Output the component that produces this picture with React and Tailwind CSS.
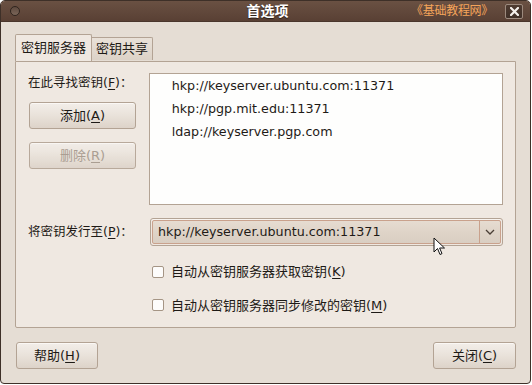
const FONT = "font-['DejaVu_Sans','Noto_Sans_CJK_SC',sans-serif]";

const Mn = ({ children }) => <span className="underline underline-offset-2">{children}</span>;

const Button = ({ children, disabled, className = "" }) => (
  <button
    disabled={disabled}
    className={`flex items-center justify-center rounded-[3px] border border-[#b3a394] bg-linear-to-b from-[#f3eee9] via-[#e9e2da] to-[#ddd3c9] text-[13px] shadow-[inset_0_1px_0_#fbf8f5] ${
      disabled ? "text-[#a3968a] opacity-90" : "text-[#1e1a16]"
    } ${className}`}
  >
    {children}
  </button>
);

const Checkbox = ({ children }) => (
  <label className="flex items-center gap-[7px] text-[13px] text-[#1e1a16]">
    <span className="w-[12px] h-[12px] rounded-[2px] border border-[#a59585] bg-[#fdfcfb]" />
    <span>{children}</span>
  </label>
);

export default function App() {
  const servers = ["hkp://keyserver.ubuntu.com:11371", "hkp://pgp.mit.edu:11371", "ldap://keyserver.pgp.com"];

  return (
    <div className={`w-[532px] h-[385px] bg-white relative ${FONT}`}>
      <div className="w-[531px] h-[384px] flex flex-col rounded-t-[5px] rounded-b-[4px] border border-[#3e3028] overflow-hidden bg-[#e5ddd4]">
        {/* title bar */}
        <div className="h-[21px] flex items-center bg-linear-to-b from-[#6a5143] to-[#594034] border-b border-[#4a362c] relative">
          <div className="ml-[9px] w-[10px] h-[10px] rounded-full border border-[#2f241e] bg-linear-to-b from-[#5e4a3f] to-[#7a6558]" />
          <div className="flex-1 text-center text-white font-bold text-[14px] pl-[104px] [text-shadow:0_1px_1px_#2a1d16]">首选项</div>
          <div className="text-[#f4a45a] text-[12px] tracking-[-0.3px] mr-[12px]">《基础教程网》</div>
          <div className="w-[18px] h-[15px] mr-[7px] rounded-[2px] border border-[#9c8a7e] bg-linear-to-b from-[#4e3b31] to-[#3f2f27] flex items-center justify-center">
            <svg width="9" height="9" viewBox="0 0 9 9">
              <path d="M1 1 L8 8 M8 1 L1 8" stroke="#f4f0ec" strokeWidth="2.2" strokeLinecap="square" />
            </svg>
          </div>
        </div>

        {/* body */}
        <div className="flex-1 flex flex-col px-[14px] pt-[13px] pb-[14px]">
          {/* tabs */}
          <div className="flex items-end h-[26px] relative z-10">
            <div className="h-[27px] px-[5px] flex items-center text-[13px] text-[#1e1a16] bg-[#efe8e1] border border-b-0 border-[#b3a394] rounded-t-[2px]">
              密钥服务器
            </div>
            <div className="h-[23px] px-[4px] mb-[1px] flex items-center text-[13px] text-[#1e1a16] bg-linear-to-b from-[#e9e1d8] to-[#dcd2c7] border border-b-0 border-l-0 border-[#b3a394] rounded-tr-[2px]">
              密钥共享
            </div>
          </div>

          {/* panel */}
          <div className="h-[267px] flex flex-col bg-[#efe8e1] border border-[#b3a394] rounded-b-[2px] pl-[12px] pr-[12px] pt-[11px]">
            <div className="flex">
              <div className="w-[121px] flex flex-col pt-[2px]">
                <div className="text-[12.5px] text-[#1e1a16] leading-[16px]">在此寻找密钥(<Mn>F</Mn>)：</div>
                <Button className="mt-[11px] ml-[1px] w-[107px] h-[27px]">添加(<Mn>A</Mn>)</Button>
                <Button disabled className="mt-[13px] ml-[1px] w-[107px] h-[27px]">删除(<Mn>R</Mn>)</Button>
              </div>
              <div className="w-[355px] h-[132px] border border-[#b3a394] bg-[#fefefd] pl-[22px]">
                {servers.map((s) => (
                  <div key={s} className="h-[23px] flex items-center text-[12.7px] text-[#1e1a16] font-['DejaVu_Sans',sans-serif]">
                    {s}
                  </div>
                ))}
              </div>
            </div>

            <div className="flex items-center mt-[13px]">
              <div className="w-[122px] text-[12.5px] text-[#1e1a16]">将密钥发行至(<Mn>P</Mn>)：</div>
              <div className="w-[353px] h-[28px] rounded-[3px] border border-[#b3a394] p-[1px] shadow-[inset_0_1px_0_#f8f4f0]">
                <div className="h-full flex rounded-[2px] border border-[#c9a18c] bg-linear-to-b from-[#e6dcd1] via-[#dfd4c8] to-[#d9cec2]">
                  <div className="flex-1 flex items-center pl-[5px] text-[12.7px] text-[#1e1a16] font-['DejaVu_Sans',sans-serif]">
                    hkp://keyserver.ubuntu.com:11371
                  </div>
                  <div className="w-[21px] border-l border-[#c9a18c] flex items-center justify-center">
                    <svg width="10" height="6" viewBox="0 0 10 6">
                      <path d="M1 1 L5 5 L9 1" stroke="#4a3f36" strokeWidth="1.3" fill="none" />
                    </svg>
                  </div>
                </div>
              </div>
            </div>

            <div className="flex flex-col gap-[14px] mt-[16px] ml-[124px]">
              <Checkbox>自动从密钥服务器获取密钥(<Mn>K</Mn>)</Checkbox>
              <Checkbox>自动从密钥服务器同步修改的密钥(<Mn>M</Mn>)</Checkbox>
            </div>
          </div>

          {/* footer buttons */}
          <div className="flex justify-between mt-[14px] pl-[1px]">
            <Button className="w-[82px] h-[27px]">帮助(<Mn>H</Mn>)</Button>
            <Button className="w-[83px] h-[27px]">关闭(<Mn>C</Mn>)</Button>
          </div>
        </div>
      </div>

      {/* mouse cursor */}
      <svg className="absolute left-[433px] top-[237px]" width="13" height="19" viewBox="0 0 13 19">
        <path d="M1 1 L1 15 L4.5 11.5 L7 17.5 L9 16.6 L6.6 11 L11.5 11 Z" fill="#fff" stroke="#111" strokeWidth="1" strokeLinejoin="round" />
      </svg>
    </div>
  );
}
